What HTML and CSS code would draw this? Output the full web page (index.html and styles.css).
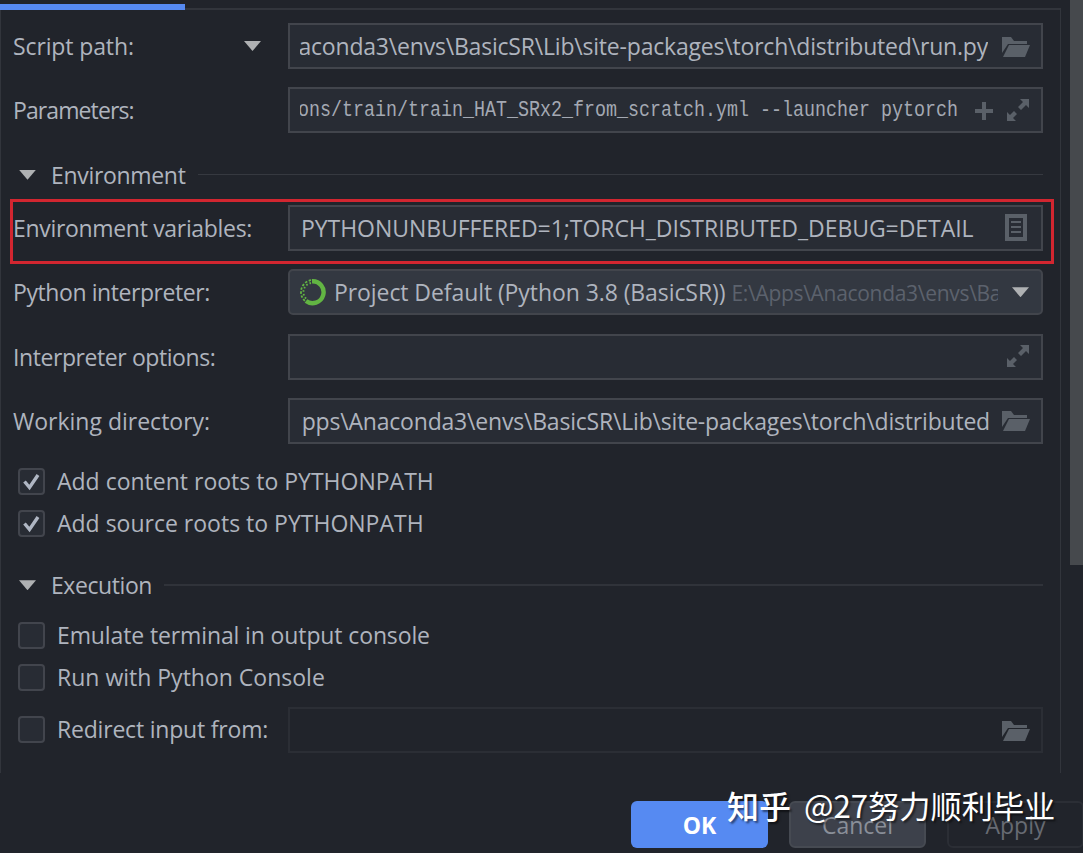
FILE: index.html
```
<!DOCTYPE html>
<html lang="en">
<head>
    <meta charset="UTF-8">
    <meta name="viewport" content="width=device-width, initial-scale=1.0">
    <title>Run Configuration</title>
    <link rel="stylesheet" href="styles.css">
</head>
<body>
    <svg width="0" height="0" class="defs">
        <symbol id="folder" viewBox="0 0 28 22">
            <path d="M0 1h9l3 4h13v3H6L0 17z"/>
            <path d="M7 9h21l-5 12H1z"/>
        </symbol>
        <symbol id="expand" viewBox="0 0 24 24">
            <path d="M14 1h9v9l-3-3-5 5-3-3 5-5z"/>
            <path d="M1 14l3 3 4-4 3 3-4 4 3 3H1z"/>
        </symbol>
        <symbol id="check" viewBox="0 0 23 23">
            <path d="M4.5 11.5l5 6L18 5" fill="none" stroke="#afb6c3" stroke-width="3.4"/>
        </symbol>
    </svg>

    <div class="dialog">
        <div class="main">
            <div class="tabs"><div class="tab-active"></div></div>
            <div class="panel">
                <div class="row">
                    <div class="label with-arrow"><span class="t-sm">Script path:</span><i class="arrow"></i></div>
                    <div class="field">
                        <div class="value tail"><span class="t-md">aconda3\envs\BasicSR\Lib\site-packages\torch\distributed\run.py</span></div>
                        <svg class="folder"><use href="#folder"/></svg>
                    </div>
                </div>
                <div class="row">
                    <div class="label"><span class="t-xl">Parameters:</span></div>
                    <div class="field">
                        <div class="value tail mono"><span>ons/train/train_HAT_SRx2_from_scratch.yml --launcher pytorch</span></div>
                        <svg class="plus" viewBox="0 0 20 20"><path d="M8 1h4v7h7v4h-7v7H8v-7H1V8h7z"/></svg>
                        <svg class="expand"><use href="#expand"/></svg>
                    </div>
                </div>

                <div class="heading env"><i class="arrow"></i><span class="t-lg">Environment</span><hr></div>

                <div class="row">
                    <div class="label"><span class="t-lg">Environment variables:</span></div>
                    <div class="field">
                        <div class="value vars"><span>PYTHONUNBUFFERED=1;TORCH_DISTRIBUTED_DEBUG=DETAIL</span></div>
                        <svg class="list" viewBox="0 0 22 27"><path fill-rule="evenodd" d="M0 0h22v27H0zM4 4v19h14V4z"/><path d="M6 7h10v2H6zM6 12h10v2H6zM6 17h10v2H6z"/></svg>
                    </div>
                    <div class="highlight"></div>
                </div>
                <div class="row">
                    <div class="label"><span class="t-lg2">Python interpreter:</span></div>
                    <div class="field select">
                        <svg class="conda" viewBox="0 0 28 28">
                            <path d="M13 3.2A11 11 0 1 1 7 23" fill="none" stroke="#62b543" stroke-width="4.4"/>
                            <path d="M12 2.2A12 12 0 0 0 6 23" fill="none" stroke="#62b543" stroke-width="1.8" stroke-dasharray="2.4 1.6"/>
                            <path d="M12 5A9.3 9.3 0 0 0 7.5 21" fill="none" stroke="#62b543" stroke-width="1.8" stroke-dasharray="1.6 2"/>
                        </svg>
                        <span class="name">Project Default (Python 3.8 (BasicSR))</span>
                        <div class="path"><span>E:\Apps\Anaconda3\envs\BasicSR</span></div>
                        <i class="arrow"></i>
                    </div>
                </div>
                <div class="row">
                    <div class="label"><span class="t-lg2">Interpreter options:</span></div>
                    <div class="field">
                        <div class="value"></div>
                        <svg class="expand"><use href="#expand"/></svg>
                    </div>
                </div>
                <div class="row">
                    <div class="label"><span>Working directory:</span></div>
                    <div class="field">
                        <div class="value tail wide"><span class="t-md">pps\Anaconda3\envs\BasicSR\Lib\site-packages\torch\distributed</span></div>
                        <svg class="folder"><use href="#folder"/></svg>
                    </div>
                </div>

                <div class="checks">
                    <div class="check"><svg class="box"><use href="#check"/></svg><span>Add content roots to PYTHONPATH</span></div>
                    <div class="check"><svg class="box"><use href="#check"/></svg><span>Add source roots to PYTHONPATH</span></div>
                </div>

                <div class="heading exec"><i class="arrow"></i><span class="t-lg2">Execution</span><hr></div>

                <div class="checks last">
                    <div class="check"><svg class="box"></svg><span class="t-sm">Emulate terminal in output console</span></div>
                    <div class="check"><svg class="box"></svg><span>Run with Python Console</span></div>
                </div>
                <div class="row">
                    <div class="label check"><svg class="box"></svg><span class="t-md">Redirect input from:</span></div>
                    <div class="field disabled">
                        <div class="value"></div>
                        <svg class="folder"><use href="#folder"/></svg>
                    </div>
                </div>
            </div>
        </div>
        <div class="scrollbar"></div>
    </div>

    <div class="buttons">
        <div class="btn ok"><span>OK</span></div>
        <div class="btn cancel"><span>Cancel</span></div>
        <div class="btn apply"><span>Apply</span></div>
    </div>
    <div class="watermark"><b>知乎</b><span>@27努力顺利毕业</span></div>
</body>
</html>
```

FILE: styles.css
```
* {
    box-sizing: border-box;
}
body {
    margin: 0;
    width: 1083px;
    height: 853px;
    overflow: hidden;
    position: relative;
    background: #21242b;
    color: #afb4be;
    font-family: "Open Sans", "Noto Sans", sans-serif;
    font-size: 23px;
    line-height: 32px;
    white-space: nowrap;
}
.defs {
    position: absolute;
}
svg {
    flex: none;
    fill: #5a6068;
}
.t-sm {
    letter-spacing: -0.12px;
}
.t-md {
    letter-spacing: -0.2px;
}
.t-lg {
    letter-spacing: -0.32px;
}
.t-lg2 {
    letter-spacing: -0.42px;
}
.t-xl {
    letter-spacing: -0.9px;
}
.dialog {
    display: flex;
    height: 773px;
}
.main {
    width: 1061px;
    display: flex;
    flex-direction: column;
}
.tabs {
    height: 10px;
    padding-top: 4px;
    border-bottom: 2px solid #32353c;
}
.tab-active {
    position: relative;
    width: 185px;
    height: 6px;
    background: #568af2;
}
.panel {
    flex: 1;
    padding: 13px 17px 0 12px;
    border-left: 1px solid #32353c;
    border-right: 1px solid #32353c;
}
.row {
    position: relative;
    display: flex;
    height: 46px;
    margin-bottom: 18.4px;
}
.label {
    width: 275px;
    display: flex;
    align-items: center;
}
.with-arrow {
    justify-content: space-between;
    padding-right: 27px;
}
.arrow {
    flex: none;
    width: 17px;
    height: 10px;
    background: #afb1b3;
    clip-path: polygon(0 0, 100% 0, 50% 100%);
}
.field {
    width: 755px;
    display: flex;
    align-items: center;
    padding: 0 11px 0 10px;
    border: 2px solid #42454c;
    background: #282c34;
}
.value {
    flex: 1;
    min-width: 0;
    display: flex;
    overflow: hidden;
    margin-right: 14px;
}
.tail {
    justify-content: flex-end;
}
.wide {
    margin-right: 12px;
}
.vars {
    padding-left: 1px;
    letter-spacing: -0.05px;
}
.mono {
    font-family: "Liberation Mono", monospace;
    font-size: 18.33px;
    margin-right: 16px;
    color: #a4a9b3;
}
.mono span {
    transform: translateY(1px) scaleY(1.2);
}
.folder {
    width: 28px;
    height: 22px;
    margin-top: 1px;
}
.plus {
    width: 20px;
    height: 20px;
    margin: 1px 12px 0 0;
}
.expand {
    width: 24px;
    height: 24px;
    margin-bottom: 1px;
}
.list {
    width: 22px;
    height: 27px;
    margin-right: 3px;
}
.highlight {
    position: absolute;
    left: -3px;
    top: -6px;
    width: 1044px;
    height: 65px;
    border: 3px solid #d22630;
}
.select {
    padding-left: 9px;
    padding-right: 12px;
    background: #333841;
    border-radius: 5px;
}
.conda {
    width: 28px;
    height: 28px;
    margin-right: 7px;
}
.name {
    letter-spacing: -0.08px;
}
.path {
    flex: 1;
    min-width: 0;
    overflow: hidden;
    margin: 2px 14px 0 6px;
    color: #5c626d;
    font-size: 21px;
    letter-spacing: -0.3px;
}
.heading {
    display: flex;
    align-items: center;
    gap: 15px;
    padding-left: 6px;
}
.heading hr {
    flex: 1;
    height: 1px;
    margin: 0 0 0 -3px;
    border: 0;
    background: #363940;
}
.env {
    height: 48px;
    margin: -1px 0 6px;
}
.exec {
    height: 32px;
    margin: 28px 0 15px;
}
.exec hr {
    height: 2px;
    background: #30333a;
}
.checks {
    display: flex;
    flex-direction: column;
    gap: 6px;
    padding-top: 1px;
}
.last {
    margin-bottom: 12px;
}
.check {
    display: flex;
    align-items: center;
    height: 36px;
    gap: 12px;
    padding-left: 5px;
}
.box {
    width: 27px;
    height: 27px;
    border: 2px solid #42454d;
    border-radius: 4px;
    background: #282c34;
}
.label.check {
    height: 44px;
}
.disabled {
    background: #21242b;
    border-color: #2b2e35;
}
.scrollbar {
    width: 13px;
    height: 565px;
    margin-left: 9px;
    background: #46494d;
}
.buttons {
    display: flex;
    gap: 21px;
    margin: 28px 0 0 631px;
}
.btn {
    flex: none;
    width: 137px;
    height: 47px;
    display: flex;
    justify-content: center;
    align-items: center;
    border-radius: 6px;
    padding-top: 1px;
}
.ok {
    background: #568af2;
    color: #fff;
    font-weight: bold;
}
.cancel {
    background: #3d414b;
    border: 2px solid #464a52;
    color: #8a8f99;
}
.apply {
    border: 2px solid #2b2e35;
    color: #676b73;
}
.watermark {
    position: absolute;
    left: 727px;
    top: 785px;
    display: flex;
    gap: 13px;
    color: #fff;
    font-family: "Noto Sans CJK SC", sans-serif;
    font-size: 31.2px;
    line-height: 40px;
    text-shadow: 2px 2px 2px rgba(0, 0, 0, 0.5);
}
.watermark b {
    font-weight: 500;
    font-size: 32px;
}
```
